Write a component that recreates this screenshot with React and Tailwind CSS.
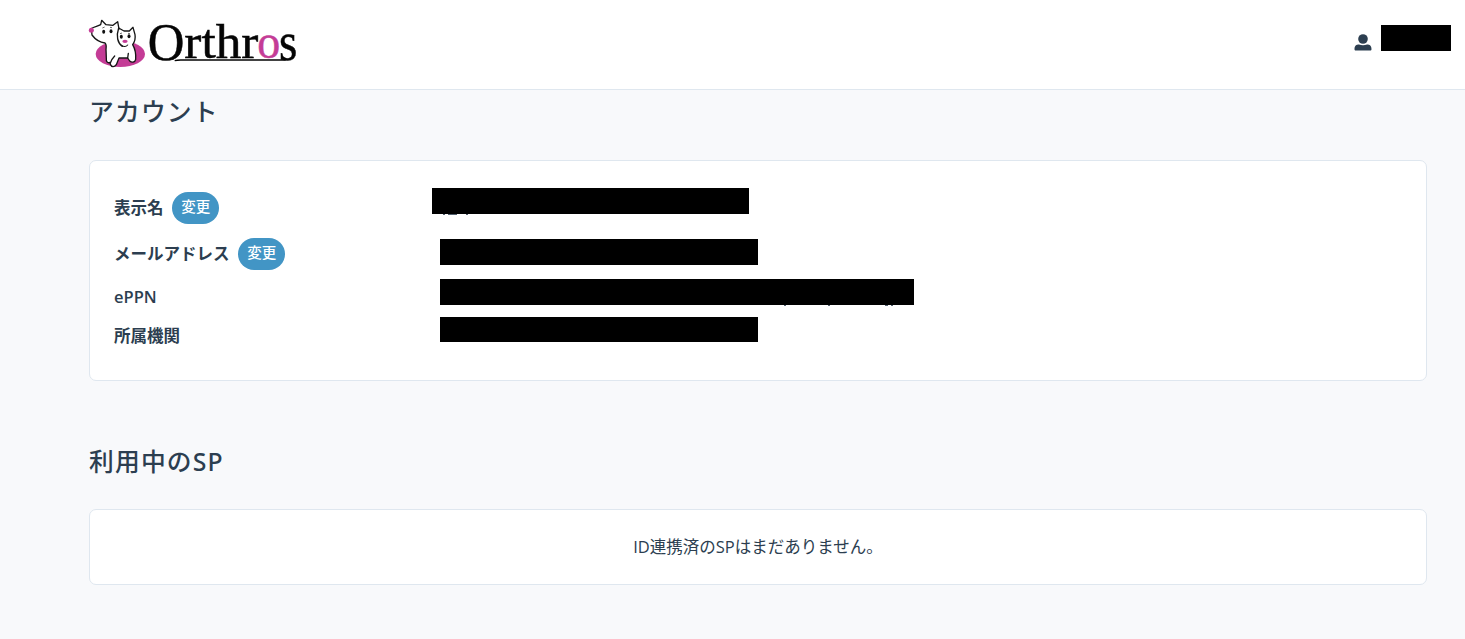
const accountRows = [
  { label: "表示名", editable: true, row: "h-[46px]", bar: "-ml-2 -mt-[14px] h-[26px] w-[317px]", marks: [[11, 2], [16, 9], [34, 2]] },
  { label: "メールアドレス", editable: true, row: "h-[46px]", bar: "-mt-[4px] h-[25.5px] w-[318px]", marks: [] },
  { label: "ePPN", editable: false, row: "h-10", bar: "-mt-[10px] h-[26px] w-[474px]", marks: [[344, 2], [388, 2], [445, 3], [451, 2]] },
  { label: "所属機関", editable: false, row: "h-[37px]", bar: "-mt-[13px] h-[25px] w-[318px]", marks: [] },
];

function Logo() {
  return (
    <svg className="block h-[62px] w-[216px] overflow-visible" viewBox="0 0 648 186" role="img" aria-label="Orthros">
      <ellipse cx="109" cy="126" rx="74" ry="39" fill="#c43c96" />
      <g fill="#fff" stroke="#161616" strokeWidth="4" strokeLinejoin="round" strokeLinecap="round">
        <path d="M22 50 C31 44 42 43 50 38 L53 25 L66 38 L87 40 L101 29 L105 51 L104 48 L120 57 L136 57 L147 46 L153 68 C155 80 151 91 146 98 C154 112 156 128 155 142 C153 152 143 152 137 147 L131 138 L105 138 L97 158 C91 166 82 166 79 157 L78 151 C70 155 66 148 67 139 L66 112 C67 102 68 97 63 93 C47 91 35 84 24 69 Z" />
        <path d="M104 48 C100 60 99 70 101 81 C103 90 108 98 115 103" fill="none" />
        <path d="M92 132 C86 138 82 145 79 153 M131 138 L133 124" fill="none" />
      </g>
      <path d="M113 100 C119 105 126 105 131 99" fill="none" stroke="#161616" strokeWidth="3.2" strokeLinecap="round" />
      <circle cx="22" cy="55" r="7.5" fill="#c43c96" />
      <ellipse cx="123" cy="88" rx="8" ry="5" fill="#c43c96" />
      <g fill="#111">
        <ellipse cx="59" cy="59" rx="4.5" ry="6" />
        <ellipse cx="81" cy="58" rx="4.5" ry="6" />
        <ellipse cx="112" cy="74" rx="4.5" ry="6" />
        <ellipse cx="135" cy="73" rx="4.5" ry="6" />
      </g>
      <path d="M55 48 l7 -3 M78 46 l6 1 M108 65 l6 -2 M132 64 l6 1" stroke="#222" strokeWidth="2" />
      <g fontFamily="'Liberation Serif', serif" fill="#050505" stroke="#050505" strokeWidth="1.5">
        <text x="191" y="145" fontSize="158" textLength="110" lengthAdjust="spacingAndGlyphs">O</text>
        <text x="301" y="138" fontSize="144" textLength="222" lengthAdjust="spacingAndGlyphs">rthr</text>
        <text x="520" y="138" fontSize="144" textLength="69" lengthAdjust="spacingAndGlyphs" fill="#c43c96" stroke="#c43c96">o</text>
        <text x="585" y="145" fontSize="162" textLength="55" lengthAdjust="spacingAndGlyphs">s</text>
      </g>
      <path d="M272 146 Q280 144 290 144 H605" fill="none" stroke="#050505" strokeWidth="4" />
    </svg>
  );
}

function UserIcon() {
  return (
    <svg className="h-[17px] w-[18px]" viewBox="0 0 18 17" fill="#2c3e50">
      <circle cx="9" cy="5" r="4.8" />
      <path d="M0.5 15.2 C0.5 11.8 2.2 10.5 5 10.5 C7.5 11.4 10.5 11.4 13 10.5 C15.8 10.5 17.5 11.8 17.5 15.2 C17.5 16.1 17 16.6 16.2 16.6 H1.8 C1 16.6 0.5 16.1 0.5 15.2 Z" />
    </svg>
  );
}

function EditButton() {
  return (
    <button className="ml-[8.8px] h-8 w-[47px] shrink-0 rounded-full bg-[#4295c5] pb-0.5 text-[14.5px] font-medium text-white">
      変更
    </button>
  );
}

export default function App() {
  return (
    <div className="min-h-screen bg-[#f8f9fb] font-['Open_Sans','Noto_Sans_CJK_JP',sans-serif] text-[16.5px] text-[#2c3e50]">
      <header className="flex h-[90px] items-start justify-between border-b border-[#dfe7ef] bg-white pl-[84px] pr-[14px] pt-3">
        <Logo />
        <div className="flex pt-[13px]">
          <div className="pt-[9px]">
            <UserIcon />
          </div>
          <div className="ml-[8.5px] h-[26px] w-[70.5px] bg-black" />
        </div>
      </header>

      <main className="pl-[89px] pr-[38px]">
        <h1 className="h-[70px] pt-[3px] text-[24.75px] font-medium leading-[38px] tracking-[1.2px]">アカウント</h1>
        <section className="h-[221px] rounded-[7px] border border-[#dfe7ef] bg-white pl-6 pt-6">
          {accountRows.map((row) => (
            <div key={row.label} className={`flex items-center ${row.row}`}>
              <div className="flex w-[326px] shrink-0 items-center font-['Open_Sans','Noto_Sans_CJK_JP',sans-serif] font-semibold leading-6">
                {row.label}
                {row.editable && <EditButton />}
              </div>
              <div className={`relative bg-black ${row.bar}`}>
                {row.marks.map(([left, width]) => (
                  <span key={left} className="absolute top-full h-px bg-[#52606f]" style={{ left, width }} />
                ))}
              </div>
            </div>
          ))}
        </section>

        <h2 className="mt-[62px] h-[66px] font-['Noto_Sans','Noto_Sans_CJK_JP',sans-serif] text-[24.75px] font-medium leading-[38px] tracking-[1.2px]">利用中のSP</h2>
        <section className="flex h-[76px] items-center justify-center rounded-[7px] border border-[#dfe7ef] bg-white">
          <p className="leading-6">ID連携済のSPはまだありません。</p>
        </section>
      </main>
    </div>
  );
}
